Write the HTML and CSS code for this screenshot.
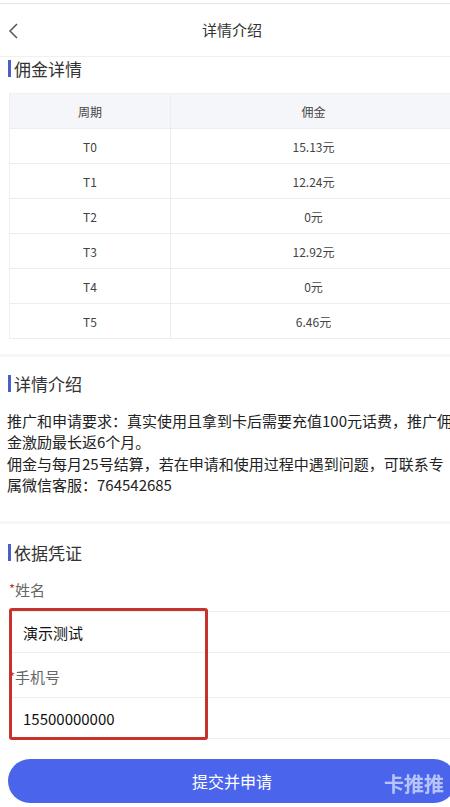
FILE: index.html
```html
<!DOCTYPE html>
<html lang="zh-CN">
<head>
<meta charset="utf-8">
<title>详情介绍</title>
<link rel="stylesheet" href="styles.css">
</head>
<body>
<div class="page">
  <header class="header">
    <span class="back">
      <svg width="12" height="16" viewBox="0 0 12 16"><path d="M10 1 L3 8 L10 15" fill="none" stroke="#555" stroke-width="1.5"/></svg>
    </span>
    <h1 class="header-title">详情介绍</h1>
  </header>

  <section class="section sec-commission">
    <h2 class="sec-title">佣金详情</h2>
    <table class="table">
      <thead>
        <tr><th class="c1">周期</th><th class="c2">佣金</th></tr>
      </thead>
      <tbody>
        <tr><td>T0</td><td>15.13元</td></tr>
        <tr><td>T1</td><td>12.24元</td></tr>
        <tr><td>T2</td><td>0元</td></tr>
        <tr><td>T3</td><td>12.92元</td></tr>
        <tr><td>T4</td><td>0元</td></tr>
        <tr><td>T5</td><td>6.46元</td></tr>
      </tbody>
    </table>
  </section>

  <section class="section sec-intro">
    <h2 class="sec-title">详情介绍</h2>
    <p class="intro">推广和申请要求：真实使用且拿到卡后需要充值100元话费，推广佣<br>金激励最长返6个月。<br>佣金与每月25号结算，若在申请和使用过程中遇到问题，可联系专<br>属微信客服：764542685</p>
  </section>

  <section class="section sec-form">
    <h2 class="sec-title">依据凭证</h2>
    <div class="form">
      <div class="label"><span class="req">*</span>姓名</div>
      <div class="field">演示测试</div>
      <div class="label"><span class="req">*</span>手机号</div>
      <div class="field">15500000000</div>
      <div class="highlight"></div>
    </div>
    <button class="submit">提交并申请<span class="watermark">卡推推</span></button>
  </section>
</div>
</body>
</html>
```

FILE: styles.css
```css
html, body {
  margin: 0;
  padding: 0;
  overflow: hidden;
  background: #fff;
}
body {
  width: 450px;
  height: 807px;
  font-family: "Noto Sans CJK SC", "Noto Sans", sans-serif;
  color: #333;
}
.page {
  width: 464px;
  padding-top: 3px;
}
.header {
  height: 52px;
  border-top: 1px solid #e6e6e6;
  border-bottom: 1px solid #f0f0f0;
  display: flex;
  align-items: center;
  justify-content: center;
  position: relative;
}
.back {
  position: absolute;
  left: 7px;
  top: 19px;
  display: flex;
}
.header-title {
  margin: 0;
  font-size: 15px;
  font-weight: normal;
  color: #333;
  line-height: 20px;
}
.section {
  padding: 0 8px;
}
.sec-title {
  margin: 0;
  font-size: 17px;
  font-weight: normal;
  line-height: 20px;
  color: #333;
  border-left: 3px solid #4a60c4;
  padding-left: 3px;
  height: 17px;
  display: flex;
  align-items: center;
}
.sec-commission {
  padding-top: 3px;
  padding-bottom: 15px;
}
.table {
  margin-top: 16px;
  margin-left: 1px;
  width: 447px;
  border-collapse: collapse;
  font-size: 12px;
  color: #444;
  border-left: 1px solid #eceef2;
}
.table th, .table td {
  height: 34px;
  padding: 0;
  text-align: center;
  font-weight: normal;
  border-bottom: 1px solid #ebedf0;
}
.table th {
  background: #f5f6f9;
  border-top: 1px solid #f0f1f4;
}
.table .c1 { width: 160px; }
.table td:first-child, .table th:first-child {
  border-right: 1px solid #ebedf0;
}
.sec-intro {
  border-top: 3px solid #f6f6f6;
  padding-top: 18px;
  padding-bottom: 26px;
}
.intro {
  margin: 18px 0 0;
  font-size: 15px;
  line-height: 21.3px;
  white-space: nowrap;
  color: #222;
  margin-left: -1px;
}
.sec-form {
  border-top: 3px solid #f6f6f6;
  padding-top: 20px;
}
.form {
  position: relative;
  margin-top: 18px;
  margin-left: 1px;
}
.label {
  font-size: 15px;
  line-height: 20px;
  color: #666;
  height: 20px;
  padding-bottom: 1px;
  border-bottom: 1px solid #eceef0;
}
.req {
  color: #c0392b;
  font-size: 13px;
  vertical-align: 2px;
}
.field {
  height: 40px;
  display: flex;
  align-items: center;
  padding-left: 14px;
  font-size: 15px;
  color: #111;
  border-bottom: 1px solid #eceef0;
}
.field + .label {
  height: 34px;
  display: flex;
  align-items: flex-end;
  padding-bottom: 10px;
}
.form .label:first-child {
  height: 20px;
  padding-bottom: 12px;
}
.highlight {
  position: absolute;
  left: 0;
  top: 29px;
  width: 193px;
  height: 126px;
  border: 3px solid #c8322d;
  border-radius: 3px;
}
.submit {
  margin-top: 20px;
  width: 448px;
  height: 44px;
  border: none;
  border-radius: 22px;
  background: #4a65ec;
  color: #fff;
  font-family: "Noto Sans CJK SC", sans-serif;
  font-size: 16px;
  position: relative;
  display: flex;
  align-items: center;
  justify-content: center;
  padding: 0;
}
.watermark {
  position: absolute;
  left: 376px;
  top: 10px;
  font-size: 20px;
  font-weight: bold;
  color: rgba(220, 228, 255, 0.75);
  filter: blur(0.6px);
}
```
